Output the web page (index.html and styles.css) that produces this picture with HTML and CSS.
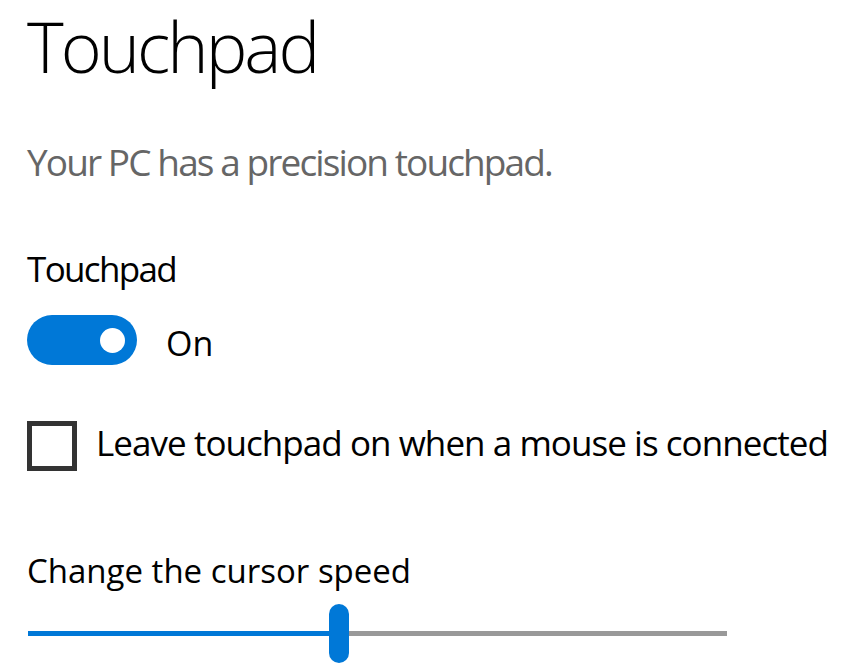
FILE: index.html
```html
<!DOCTYPE html>
<html lang="en">
<head>
<meta charset="utf-8">
<title>Touchpad</title>
<link rel="stylesheet" href="styles.css">
</head>
<body>
<main class="page">
  <h1 class="title">Touchpad</h1>
  <p class="desc">Your PC has a precision touchpad.</p>
  <div class="label">Touchpad</div>
  <div class="toggle-row">
    <span class="toggle"><span class="knob"></span></span>
    <span class="state">On</span>
  </div>
  <label class="check-row">
    <span class="box"></span>
    <span class="check-text">Leave touchpad on when a mouse is connected</span>
  </label>
  <div class="speed-label">Change the cursor speed</div>
  <div class="slider">
    <div class="fill" style="width:301px"></div>
    <div class="thumb"></div>
    <div class="rest"></div>
  </div>
</main>
</body>
</html>
```
FILE: styles.css
```css
html, body {
  margin: 0;
  padding: 0;
  background: #ffffff;
}
body {
  font-family: "Open Sans", "Noto Sans", "Liberation Sans", sans-serif;
  color: #000000;
}
.page {
  display: flex;
  flex-direction: column;
  align-items: flex-start;
  padding: 0 0 0 27px;
}
.title {
  margin: 0;
  padding: 0 6px 0 0;
  font-size: 70px;
  font-weight: 300;
  line-height: 92px;
  letter-spacing: -3px;
}
.desc {
  margin: 45px 0 0 0;
  padding-right: 4px;
  font-size: 37px;
  line-height: 50px;
  color: #666666;
  letter-spacing: -1.9px;
}
.label {
  margin-top: 57px;
  padding-right: 4px;
  font-size: 35px;
  line-height: 50px;
  letter-spacing: -1.65px;
}
.toggle-row {
  margin-top: 21px;
  height: 50px;
  display: flex;
  align-items: flex-start;
  gap: 29px;
}
.toggle {
  box-sizing: border-box;
  width: 110px;
  height: 50px;
  border-radius: 25px;
  background: #0078d7;
  display: flex;
  align-items: center;
  justify-content: flex-end;
  padding-right: 12px;
}
.knob {
  width: 25px;
  height: 25px;
  border-radius: 50%;
  background: #ffffff;
}
.state {
  margin-top: 3px;
  font-size: 34px;
  line-height: 50px;
}
.check-row {
  margin-top: 56px;
  display: flex;
  align-items: flex-start;
  gap: 19px;
}
.box {
  box-sizing: border-box;
  width: 50px;
  height: 50px;
  border: 5px solid #333333;
  background: #ffffff;
}
.check-text {
  margin-top: 9px;
  padding-right: 2px;
  font-size: 35px;
  line-height: 26px;
  letter-spacing: -0.95px;
}
.speed-label {
  margin-top: 80px;
  font-size: 33px;
  line-height: 40px;
  letter-spacing: 0;
}
.slider {
  margin-top: 13px;
  margin-left: 1px;
  width: 699px;
  height: 59px;
  display: flex;
  align-items: center;
}
.fill {
  height: 5px;
  background: #0078d7;
}
.thumb {
  width: 20px;
  height: 59px;
  border-radius: 10px;
  background: #0078d7;
}
.rest {
  flex: 1;
  height: 5px;
  background: #999999;
}
```
